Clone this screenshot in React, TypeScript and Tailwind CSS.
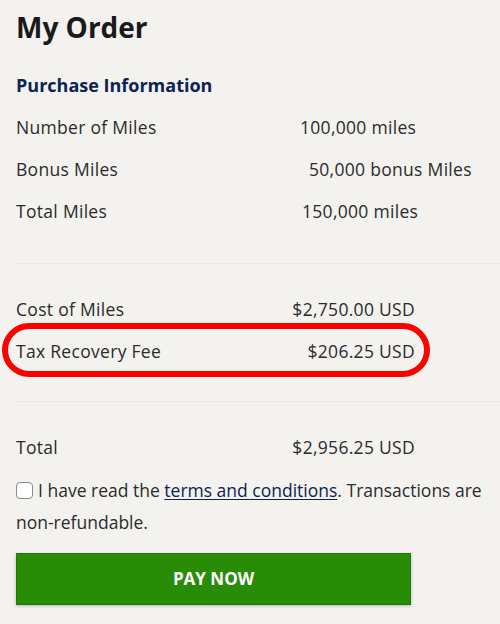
import React from 'react';

const font = { fontFamily: '"Open Sans", "Liberation Sans", sans-serif' };

function MilesRow({ label, value, offset }: { label: string; value: string; offset: string }) {
  return (
    <div className="flex h-[42px] items-center text-[17.5px] tracking-[0.3px] text-[#2b2b2b]">
      <span className="w-[284px] shrink-0">{label}</span>
      <span className={offset}>{value}</span>
    </div>
  );
}

function CostRow({ label, value }: { label: string; value: string }) {
  return (
    <div className="flex h-[42px] w-[399px] items-center justify-between text-[17.5px] tracking-[0.3px] text-[#2b2b2b]">
      <span>{label}</span>
      <span>{value}</span>
    </div>
  );
}

export default function App() {
  return (
    <div className="relative h-[624px] w-[500px] overflow-hidden bg-[#f3f2ef] pl-4" style={font}>
      <h1 className="pt-[9px] text-[28px] font-bold leading-[36px] text-[#1a1a1a]">My Order</h1>
      <h2 className="mt-[28px] text-[18px] font-bold leading-[24px] text-[#0c2250]">Purchase Information</h2>

      <div className="mt-[9px]">
        <MilesRow label="Number of Miles" value="100,000 miles" offset="ml-0" />
        <MilesRow label="Bonus Miles" value="50,000 bonus Miles" offset="ml-[9px]" />
        <MilesRow label="Total Miles" value="150,000 miles" offset="ml-[2px]" />
      </div>

      <div className="mt-[31px] border-t border-[#e9e8e4]" />

      <div className="mt-[24px]">
        <CostRow label="Cost of Miles" value="$2,750.00 USD" />
        <CostRow label="Tax Recovery Fee" value="$206.25 USD" />
      </div>

      <div className="mt-[29px] border-t border-[#e9e8e4]" />

      <div className="mt-[24px]">
        <CostRow label="Total" value="$2,956.25 USD" />
      </div>

      <div className="mt-[6px] w-[484px] text-[17.5px] leading-[32px] text-[#2b2b2b]">
        <input
          type="checkbox"
          className="mr-[5px] inline-block h-[17px] w-[17px] translate-y-[2px] appearance-none rounded-[4px] border border-[#8a8a8a] bg-white align-baseline"
        />
        I have read the{' '}
        <a href="#" className="text-[#0c2250] underline underline-offset-2">
          terms and conditions
        </a>
        . Transactions are <span className="whitespace-nowrap">non-refundable.</span>
      </div>

      <button className="mt-[15px] h-[52px] w-[395px] border border-[#1f7a05] bg-[#288c06] text-[17px] font-bold text-white shadow-[0_1px_3px_rgba(0,0,0,0.25)]">
        PAY NOW
      </button>

      <div className="pointer-events-none absolute left-[2px] top-[323px] h-[54px] w-[428px] rounded-[27px] border-[6px] border-[#ff0000]" />
    </div>
  );
}
